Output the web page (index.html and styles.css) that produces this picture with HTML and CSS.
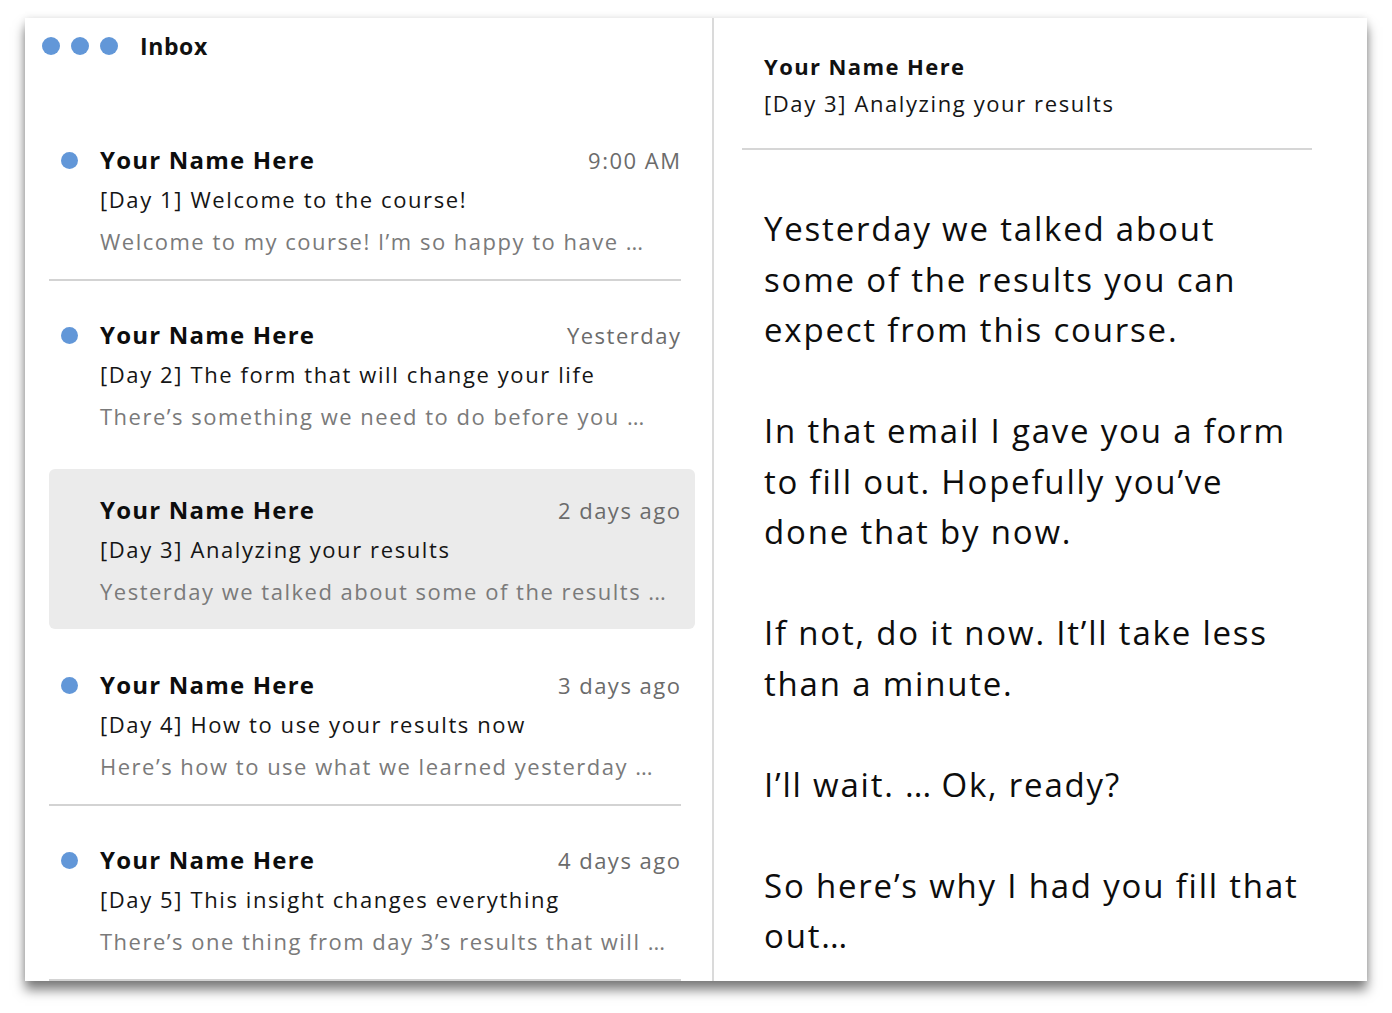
FILE: index.html
```html
<!DOCTYPE html>
<html lang="en">
<head>
<meta charset="utf-8">
<title>Inbox</title>
<link rel="stylesheet" href="styles.css">
</head>
<body>
<div class="window">
  <section class="list-pane">
    <header class="list-header">
      <span class="win-dot"></span><span class="win-dot"></span><span class="win-dot"></span>
      <h1 class="inbox-title">Inbox</h1>
    </header>
    <div class="items">
      <article class="item">
        <span class="unread"></span>
        <div class="item-body">
          <div class="item-top"><span class="sender">Your Name Here</span><span class="time">9:00 AM</span></div>
          <div class="subject">[Day 1] Welcome to the course!</div>
          <div class="preview">Welcome to my course! I’m so happy to have <span class="dots">...</span></div>
        </div>
      </article>
      <article class="item no-line">
        <span class="unread"></span>
        <div class="item-body">
          <div class="item-top"><span class="sender">Your Name Here</span><span class="time">Yesterday</span></div>
          <div class="subject">[Day 2] The form that will change your life</div>
          <div class="preview">There’s something we need to do before you <span class="dots">...</span></div>
        </div>
      </article>
      <article class="item selected no-line">
        <span class="read"></span>
        <div class="item-body">
          <div class="item-top"><span class="sender">Your Name Here</span><span class="time">2 days ago</span></div>
          <div class="subject">[Day 3] Analyzing your results</div>
          <div class="preview">Yesterday we talked about some of the results <span class="dots">...</span></div>
        </div>
      </article>
      <article class="item">
        <span class="unread"></span>
        <div class="item-body">
          <div class="item-top"><span class="sender">Your Name Here</span><span class="time">3 days ago</span></div>
          <div class="subject">[Day 4] How to use your results now</div>
          <div class="preview">Here’s how to use what we learned yesterday <span class="dots">...</span></div>
        </div>
      </article>
      <article class="item">
        <span class="unread"></span>
        <div class="item-body">
          <div class="item-top"><span class="sender">Your Name Here</span><span class="time">4 days ago</span></div>
          <div class="subject">[Day 5] This insight changes everything</div>
          <div class="preview">There’s one thing from day 3’s results that will <span class="dots">...</span></div>
        </div>
      </article>
    </div>
  </section>
  <section class="read-pane">
    <header class="read-header">
      <div class="read-sender">Your Name Here</div>
      <div class="read-subject">[Day 3] Analyzing your results</div>
    </header>
    <div class="read-body">
      <p>Yesterday we talked about<br>some of the results you can<br>expect from this course.</p>
      <p>In that email I gave you a form<br>to fill out. Hopefully you’ve<br>done that by now.</p>
      <p>If not, do it now. It’ll take less<br>than a minute.</p>
      <p>I’ll wait. <span class="dots">...</span> Ok, ready?</p>
      <p>So here’s why I had you fill that<br>out<span class="dots">...</span></p>
    </div>
  </section>
</div>
</body>
</html>
```

FILE: styles.css
```css
html, body {
  margin: 0;
  padding: 0;
  background: #ffffff;
}

body {
  padding: 18px 25px 32px 25px;
  font-family: "Open Sans", "Noto Sans", sans-serif;
  color: #111111;
}

.window {
  width: 1342px;
  height: 963px;
  display: flex;
  background: #ffffff;
  overflow: hidden;
  box-shadow: 0 9px 11px rgba(0, 0, 0, 0.5), 0 0 7px rgba(0, 0, 0, 0.1);
}

/* ---------- list pane ---------- */
.list-pane {
  width: 689px;
  flex: none;
  border-right: 2px solid #dadada;
  box-sizing: border-box;
  overflow: hidden;
}

.list-header {
  height: 56px;
  display: flex;
  align-items: center;
  padding-left: 17px;
  gap: 11px;
}

.win-dot {
  width: 18px;
  height: 18px;
  border-radius: 50%;
  background: #6297d8;
  flex: none;
}

.inbox-title {
  margin: 0 0 0 11px;
  font-size: 23px;
  font-weight: 700;
  line-height: 30px;
  letter-spacing: 0.6px;
}

.items {
  padding-top: 30px;
  padding-left: 24px;
  width: 646px;
}

.item {
  position: relative;
  margin-top: 15px;
  height: 160px;
  box-sizing: border-box;
  padding: 23px 15px 0 0;
  display: flex;
  border-radius: 6px;
}

.item::after {
  content: "";
  position: absolute;
  left: 0;
  right: 14px;
  bottom: -2px;
  height: 2px;
  background: #d3d3d3;
}

.item.no-line::after {
  display: none;
}

.item.selected {
  background: #ebebeb;
}

.unread,
.read {
  flex: none;
  width: 17px;
  height: 17px;
  margin: 10px 22px 0 12px;
  border-radius: 50%;
  background: #6297d8;
}

.read {
  background: transparent;
}

.item-body {
  flex: 1;
  min-width: 0;
}

.item-top {
  display: flex;
  justify-content: space-between;
  align-items: baseline;
  height: 36px;
  line-height: 36px;
}

.sender {
  font-size: 24px;
  font-weight: 700;
  letter-spacing: 1.2px;
  color: #0d0d0d;
}

.time {
  font-size: 22px;
  letter-spacing: 1.5px;
  margin-right: -1.5px;
  color: #6b6b6b;
}

.subject {
  font-size: 22px;
  line-height: 42px;
  letter-spacing: 1.6px;
  color: #151515;
  white-space: nowrap;
}

.preview {
  font-size: 22px;
  line-height: 42px;
  letter-spacing: 1.5px;
  color: #7a7a7a;
  white-space: nowrap;
}

.dots {
  letter-spacing: 0;
}

/* ---------- reading pane ---------- */
.read-pane {
  flex: 1;
  min-width: 0;
  padding-top: 30px;
}

.read-header {
  margin: 0 55px 0 28px;
  padding: 0 0 26px 22px;
  border-bottom: 2px solid #d6d6d6;
}

.read-sender {
  font-size: 22px;
  font-weight: 700;
  line-height: 36px;
  letter-spacing: 1.4px;
}

.read-subject {
  font-size: 22px;
  line-height: 38px;
  letter-spacing: 1.6px;
  color: #151515;
}

.read-body {
  padding: 54px 0 0 50px;
}

.read-body p {
  margin: 0 0 50.5px 0;
  font-size: 33px;
  line-height: 50.5px;
  letter-spacing: 1.8px;
  white-space: nowrap;
  color: #0d0d0d;
}
```
